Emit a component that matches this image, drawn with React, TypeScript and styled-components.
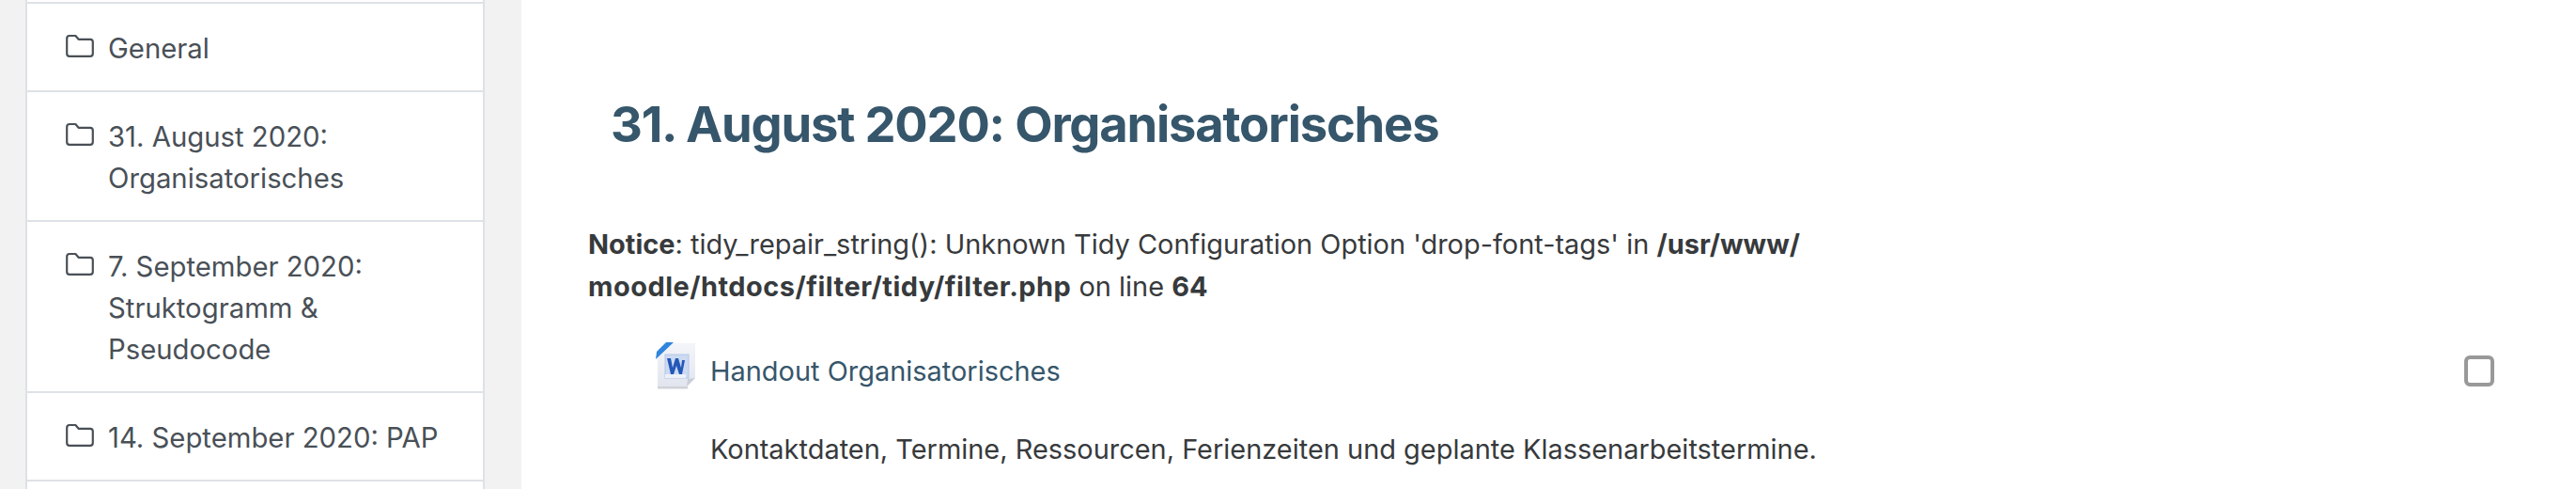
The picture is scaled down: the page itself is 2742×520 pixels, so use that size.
import React from 'react';
import styled, { createGlobalStyle } from 'styled-components';

const GlobalStyle = createGlobalStyle`
  html, body {
    margin: 0;
    padding: 0;
    height: 520px;
    overflow: hidden;
    background: #f2f2f2;
    font-family: Inter, "Liberation Sans", sans-serif;
    color: #373a3c;
  }
`;

const Page = styled.div`
  display: flex;
  align-items: flex-start;
  height: 520px;
  overflow: hidden;
  padding-left: 27px;
`;

const Sidebar = styled.nav`
  flex: 0 0 489px;
  box-sizing: border-box;
  padding-top: 2px;
  background: #fff;
  border-left: 2px solid #dee2e6;
  border-right: 2px solid #dee2e6;
`;

const SectionRow = styled.div`
  display: flex;
  align-items: flex-start;
  gap: 15px;
  padding: 26px 30px 22px 41px;
  border-top: 2px solid #dee2e6;
  font-size: 29.3px;
  line-height: 44px;
  color: #495057;
`;

const NextRow = styled.div`
  height: 40px;
  border-top: 2px solid #dee2e6;
`;

const FolderIcon = styled.svg`
  flex: 0 0 30px;
  width: 30px;
  height: 26px;
  margin-top: 6px;
  color: #495057;
`;

const Main = styled.main`
  flex: 1;
  align-self: stretch;
  margin-left: 39px;
  background: #fff;
  padding: 0 0 0 71px;
`;

const Heading = styled.h1`
  margin: 97px 0 0 24px;
  font-size: 52.5px;
  line-height: 70px;
  font-weight: 700;
  letter-spacing: -1.2px;
  color: #36566b;
`;

const Notice = styled.p`
  margin: 70px 0 0;
  width: 1340px;
  font-size: 28.95px;
  line-height: 45px;
  color: #373a3c;

  b {
    font-weight: 700;
  }
`;

const FilePath = styled.b`
  letter-spacing: 0.5px;
`;

const Activity = styled.div`
  display: flex;
  align-items: flex-start;
  margin: 37px 87px 0 72px;
`;

const DocIcon = styled.svg`
  flex: 0 0 44px;
  width: 44px;
  height: 50px;
  margin-right: 14px;
  filter: blur(0.7px);
`;

const ActivityLink = styled.a`
  flex: 1;
  margin-top: 8px;
  font-size: 28.95px;
  line-height: 45px;
  color: #36566b;
`;

const CheckBox = styled.span`
  flex: 0 0 auto;
  box-sizing: border-box;
  width: 32px;
  height: 33px;
  margin-top: 14px;
  border: 4px solid #999;
  border-radius: 6px;
`;

const Description = styled.p`
  margin: 38px 0 0 130px;
  font-size: 28.95px;
  line-height: 45px;
  color: #373a3c;
`;

const sections = [
  'General',
  '31. August 2020: Organisatorisches',
  '7. September 2020: Struktogramm & Pseudocode',
  '14. September 2020: PAP',
];

const Folder = () => (
  <FolderIcon viewBox="0 0 30 26" fill="none" stroke="currentColor" strokeWidth="2.2">
    <path d="M1.2 5c0-2 1-3 2.8-3h6.4l3.2 3.8H26c1.8 0 2.8 1 2.8 2.8V21c0 1.8-1 2.8-2.8 2.8H4c-1.8 0-2.8-1-2.8-2.8Z" strokeLinejoin="round" />
  </FolderIcon>
);

const WordDoc = () => (
  <DocIcon viewBox="0 0 44 50">
    <defs>
      <linearGradient id="sheet" x1="0" y1="0" x2="0" y2="1">
        <stop offset="0" stopColor="#f4f5f9" />
        <stop offset="1" stopColor="#e2e5ee" />
      </linearGradient>
    </defs>
    <path d="M2 9 10 1h32v37l-9 9H2Z" fill="url(#sheet)" />
    <path d="M0 18 19 0h-8L1 10Z" fill="#2f86dc" />
    <rect x="10" y="13" width="25" height="25" fill="#ccdaf2" stroke="#b3c6ea" />
    <path d="M12 17h4l2 10 3-10h3l3 10 1-8h3l-3 15h-3l-3-9-3 9h-3Z" fill="#2358b8" />
    <path d="M10 34h22v4H10Z" fill="#eef1f8" />
    <path d="M33 47l1-8 8-1Z" fill="#c9ced8" />
    <rect x="2" y="47" width="32" height="2.5" fill="#cfd2d8" />
  </DocIcon>
);

const App: React.FC = () => (
  <>
    <GlobalStyle />
    <Page>
      <Sidebar>
        {sections.map(title => (
          <SectionRow key={title}>
            <Folder />
            <span>{title}</span>
          </SectionRow>
        ))}
        <NextRow />
      </Sidebar>
      <Main>
        <Heading>31. August 2020: Organisatorisches</Heading>
        <Notice>
          <b>Notice</b>: tidy_repair_string(): Unknown Tidy Configuration Option 'drop-font-tags' in{' '}
          <b>/usr/www/</b>
          <wbr />
          <FilePath>moodle/htdocs/filter/tidy/filter.php</FilePath> on line <b>64</b>
        </Notice>
        <Activity>
          <WordDoc />
          <ActivityLink>Handout Organisatorisches</ActivityLink>
          <CheckBox />
        </Activity>
        <Description>
          Kontaktdaten, Termine, Ressourcen, Ferienzeiten und geplante Klassenarbeitstermine.
        </Description>
      </Main>
    </Page>
  </>
);

export default App;
